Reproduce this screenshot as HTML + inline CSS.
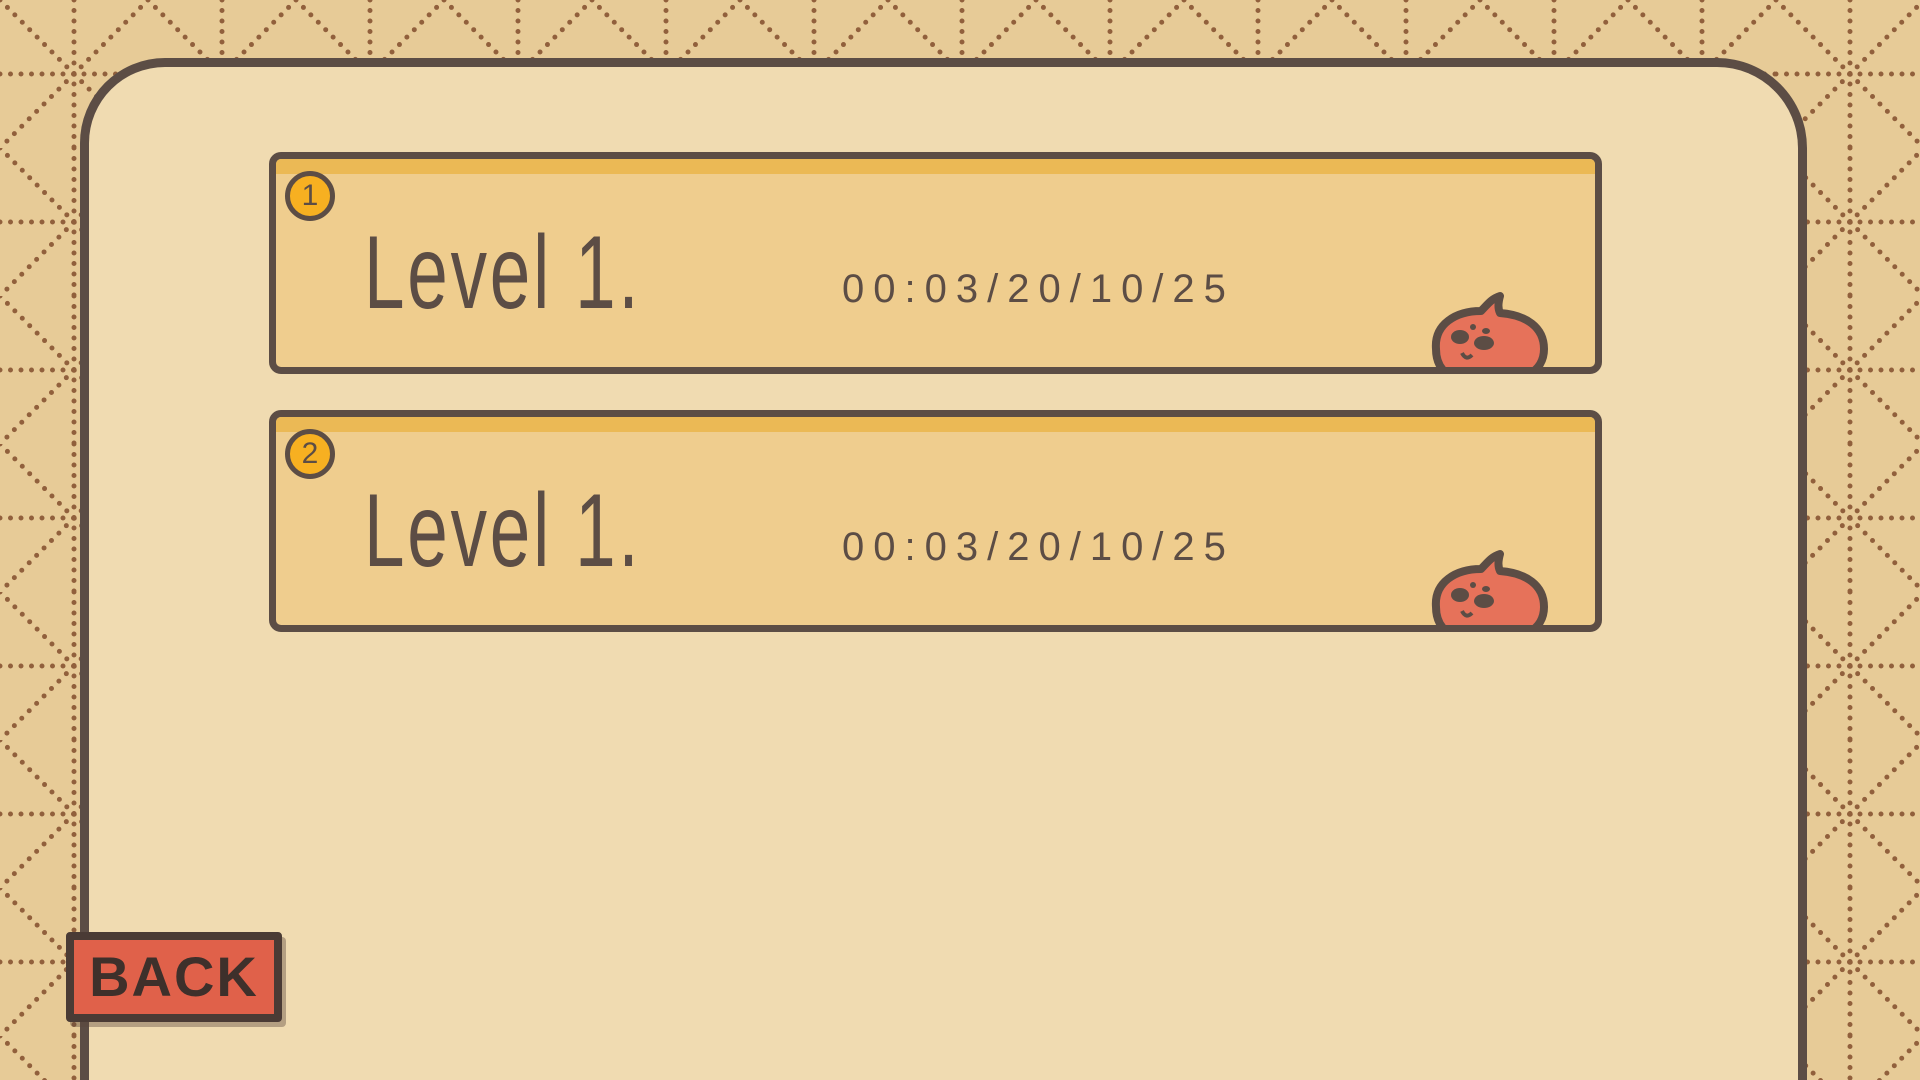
<!DOCTYPE html>
<html><head><meta charset="utf-8"><style>
html,body{margin:0;padding:0;width:1920px;height:1080px;overflow:hidden;background:#e7cb97;font-family:"Liberation Sans",sans-serif;position:relative}
#bg{position:absolute;left:0;top:0}
.panel{position:absolute;left:80px;top:58px;width:1727px;height:1022px;background:#f0dbb1;border:9px solid #5c4d45;border-bottom:none;border-radius:85px 90px 0 0;box-sizing:border-box}
.card{position:absolute;left:269px;width:1333px;height:222px;background:#efcd8e;border:7px solid #5c4d45;border-radius:12px;box-sizing:border-box;overflow:hidden}
.card .stripe{position:absolute;left:0;right:0;top:0;height:15px;background:#ebb955}
.badge{position:absolute;left:9px;width:40px;height:40px;border-radius:50%;background:#f7b021;border:5px solid #5c4d45;color:#5c4d45;font-size:30px;line-height:40px;text-align:center;top:12px}
.lvl{position:absolute;left:88px;top:62px;font-size:104px;color:#5c4d45;letter-spacing:4px;transform:scaleX(0.7);transform-origin:left;line-height:1}
.time{position:absolute;left:566px;top:110px;font-size:40px;color:#5c4d45;letter-spacing:9px;line-height:1}
.blob{position:absolute;left:1150px;top:130px}
.back{position:absolute;left:66px;top:932px;width:216px;height:90px;background:#e0614a;border:8px solid #4a3b35;box-sizing:border-box;border-radius:4px;color:#3e302b;font-weight:bold;font-size:56px;line-height:74px;text-align:center;letter-spacing:2px;box-shadow:4px 5px 0 rgba(90,70,60,0.4)}
</style></head><body>
<svg id="bg" width="1920" height="1080">
<defs><pattern id="p" width="148" height="148" patternUnits="userSpaceOnUse">
<g stroke="#91603c" stroke-width="5" stroke-linecap="round" stroke-dasharray="0 10.5" fill="none">
<line x1="0" y1="0" x2="148" y2="148"/><line x1="148" y1="0" x2="0" y2="148"/>
<line x1="74" y1="0" x2="74" y2="148"/><line x1="0" y1="74" x2="148" y2="74"/>
</g></pattern></defs>
<rect width="1920" height="1080" fill="#e7cb97"/>
<rect width="1920" height="1080" fill="url(#p)"/>
</svg>
<div class="panel"></div>

<div class="card" style="top:152px"><div class="stripe"></div><div class="badge">1</div>
<div class="lvl">Level 1.</div><div class="time">00:03/20/10/25</div>
<svg class="blob" width="130" height="90" viewBox="0 0 130 90"><path d="M10 60 C8 35 30 22 55 22 C62 15 65 10 74 7 C72 14 72 20 74 24 C100 26 118 38 118 60 C118 72 112 80 105 84 L20 84 C13 78 10 70 10 60Z" fill="#e6725a" stroke="#5c4d45" stroke-width="8" stroke-linejoin="round"/>
<ellipse cx="34" cy="48" rx="9" ry="7" fill="#5c4d45"/><ellipse cx="58" cy="54" rx="10" ry="7" fill="#5c4d45"/><circle cx="47" cy="38" r="3" fill="#5c4d45"/><ellipse cx="60" cy="42" rx="4" ry="3" fill="#5c4d45"/><path d="M36 64 Q40 72 46 66" stroke="#5c4d45" stroke-width="4" fill="none"/></svg>
</div>

<div class="card" style="top:410px"><div class="stripe"></div><div class="badge">2</div>
<div class="lvl">Level 1.</div><div class="time">00:03/20/10/25</div>
<svg class="blob" width="130" height="90" viewBox="0 0 130 90"><path d="M10 60 C8 35 30 22 55 22 C62 15 65 10 74 7 C72 14 72 20 74 24 C100 26 118 38 118 60 C118 72 112 80 105 84 L20 84 C13 78 10 70 10 60Z" fill="#e6725a" stroke="#5c4d45" stroke-width="8" stroke-linejoin="round"/>
<ellipse cx="34" cy="48" rx="9" ry="7" fill="#5c4d45"/><ellipse cx="58" cy="54" rx="10" ry="7" fill="#5c4d45"/><circle cx="47" cy="38" r="3" fill="#5c4d45"/><ellipse cx="60" cy="42" rx="4" ry="3" fill="#5c4d45"/><path d="M36 64 Q40 72 46 66" stroke="#5c4d45" stroke-width="4" fill="none"/></svg>
</div>

<div class="back">BACK</div>
</body></html>
